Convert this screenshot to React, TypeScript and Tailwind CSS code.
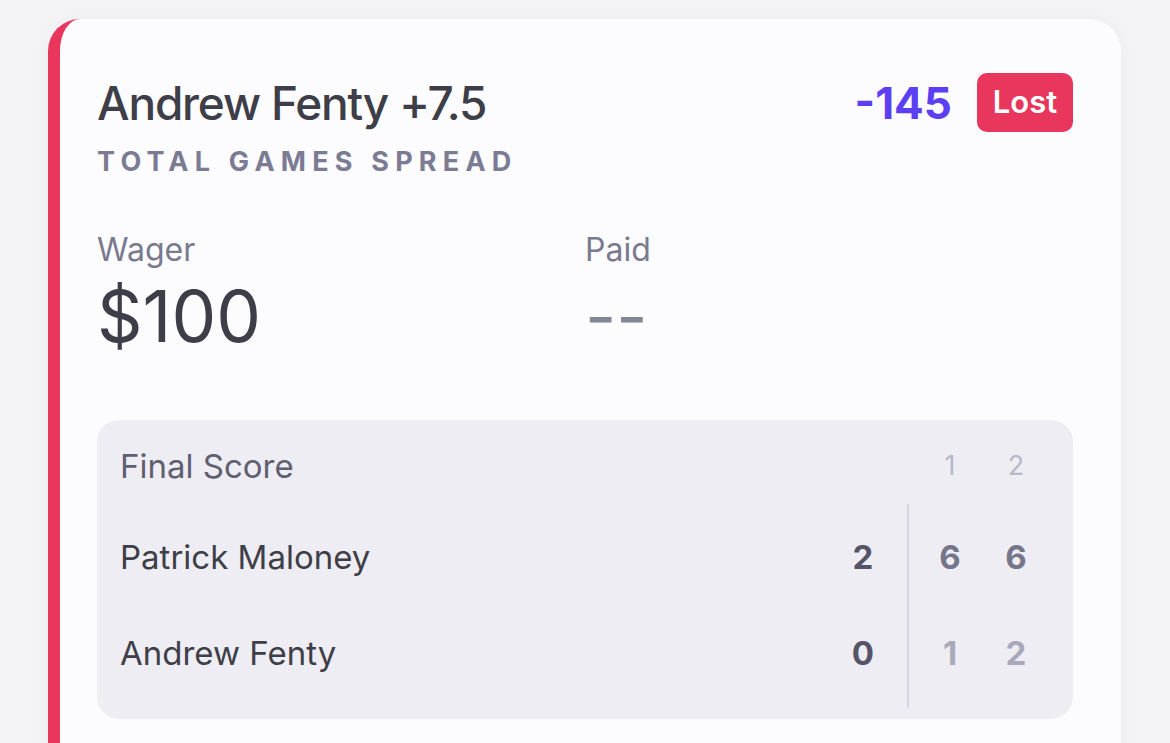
export default function App() {
  const rows = [
    { name: "Patrick Maloney", total: "2", sets: ["6", "6"], setColor: "text-[#76768a]" },
    { name: "Andrew Fenty", total: "0", sets: ["1", "2"], setColor: "text-[#a9a9bb]" },
  ];

  return (
    <div
      className="min-h-screen w-full overflow-hidden bg-[#f4f4f6] pt-[19px] pl-[48px]"
      style={{ fontFamily: "Inter, 'Noto Sans', sans-serif" }}
    >
      <div className="w-[1073px] h-[760px] rounded-[32px] border-l-[12px] border-[#e8365d] bg-[#fcfcfe] pt-[56px] pl-[37px] pr-[48px] shadow-[0_0_24px_rgba(0,0,0,0.04)]">
        {/* header */}
        <div className="flex items-start justify-between">
          <div>
            <h1 className="text-[46px] leading-[56px] font-medium tracking-[-1.2px] text-[#3e3e48]">
              Andrew Fenty +7.5
            </h1>
            <p className="mt-[15px] text-[27px] leading-[32px] font-bold tracking-[0.23em] text-[#7b7b93]">
              TOTAL GAMES SPREAD
            </p>
          </div>
          <div className="flex items-center gap-[25px] -mt-[2px]">
            <span className="text-[44px] leading-[56px] font-bold text-[#5c3ff2]">-145</span>
            <span className="flex h-[59px] w-[96px] items-center justify-center rounded-[10px] bg-[#e8365d] text-[31px] font-semibold text-white">
              Lost
            </span>
          </div>
        </div>

        {/* wager / paid */}
        <div className="mt-[52px] grid grid-cols-2">
          <div>
            <div className="text-[32px] leading-[40px] text-[#7a7a8e]">Wager</div>
            <div className="mt-[10px] text-[71px] leading-[72px] text-[#3e3e48]">$100</div>
          </div>
          <div>
            <div className="text-[32px] leading-[40px] text-[#7a7a8e]">Paid</div>
            <div className="mt-[10px] text-[68px] leading-[72px] text-[#85859a]">--</div>
          </div>
        </div>

        {/* final score */}
        <div className="mt-[68px] h-[299px] rounded-[22px] bg-[#eeedf3] pl-[23px] pr-[40px] pt-[28px]">
          <div className="flex items-center">
            <div className="flex-1 text-[33px] leading-[36px] text-[#5f5f70]">Final Score</div>
            <div className="flex w-[100px] justify-between text-[27px] leading-[36px] text-[#b8b8c8]">
              <span className="w-[34px] text-center">1</span>
              <span className="w-[34px] text-center">2</span>
            </div>
          </div>
          <div className="mt-[20px] flex">
            <div className="flex-1 py-[6px]">
              {rows.map((r) => (
                <div key={r.name} className="flex h-[96px] items-center">
                  <div className="flex-1 text-[33px] text-[#3e3e48]">{r.name}</div>
                  <div className="w-[40px] text-center text-[33px] font-bold text-[#55556a]">{r.total}</div>
                </div>
              ))}
            </div>
            <div className="mx-[24px] w-[2px] bg-[#d6d6df]" />
            <div className="w-[100px] py-[6px]">
              {rows.map((r) => (
                <div key={r.name} className={`flex h-[96px] items-center justify-between text-[33px] font-bold ${r.setColor}`}>
                  {r.sets.map((s, i) => (
                    <span key={i} className="w-[34px] text-center">{s}</span>
                  ))}
                </div>
              ))}
            </div>
          </div>
        </div>
      </div>
    </div>
  );
}
